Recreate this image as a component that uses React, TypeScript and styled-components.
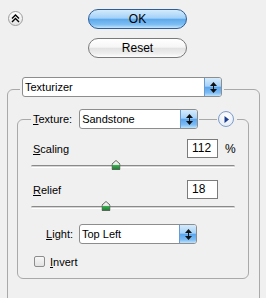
import React, { useId } from "react";
import styled, { createGlobalStyle } from "styled-components";

const Global = createGlobalStyle`
  html, body { margin: 0; padding: 0; background: #f0f0f0; overflow: hidden; }
  body {
    width: 266px; height: 298px;
    font-family: "Liberation Sans", Arial, sans-serif;
    font-size: 11px; color: #000;
  }
`;

const Page = styled.div`
  width: 266px;
  height: 298px;
  overflow: hidden;
  background: #f0f0f0;
`;

const TopBar = styled.div`
  display: flex;
  align-items: flex-start;
  padding: 9px 0 0 8px;
`;

const CollapseButton = styled.div`
  width: 15px;
  height: 15px;
  margin-top: 2px;
  margin-right: 65px;
  box-sizing: border-box;
  border: 1px solid #9c9c9c;
  border-radius: 50%;
  background: linear-gradient(#ffffff, #e4e4e4);
  display: flex;
  align-items: center;
  justify-content: center;
`;

const ButtonColumn = styled.div`
  display: flex;
  flex-direction: column;
  gap: 9px;
`;

const PillButton = styled.div<{ $primary?: boolean }>`
  width: 99px;
  height: 20px;
  box-sizing: border-box;
  border-radius: 10px;
  border: 1px solid ${(p) => (p.$primary ? "#2f5d98" : "#7a7a7a")};
  background: ${(p) =>
    p.$primary
      ? "linear-gradient(#d3ebfc 0%, #a3d1f7 45%, #5ea9ec 52%, #7fbff3 82%, #c4e6fc 100%)"
      : "linear-gradient(#ffffff 0%, #f6f6f6 45%, #e2e2e2 52%, #efefef 82%, #fdfdfd 100%)"};
  display: flex;
  align-items: center;
  justify-content: center;
  font-size: 12px;
  line-height: 18px;
`;

const OuterGroup = styled.fieldset`
  margin: 19px 6px 0 7px;
  padding: 8px 10px 40px 9px;
  border: 1px solid #a9a9a9;
  border-radius: 6px;
  min-width: 0;
`;

const OuterLegend = styled.legend`
  padding: 0 2px 4px 2px;
  margin-left: 3px;
  display: flex;
`;

const SelectBox = styled.div<{ $w: number }>`
  width: ${(p) => p.$w}px;
  height: 20px;
  box-sizing: border-box;
  display: flex;
  background: #fff;
  border: 1px solid #8d8d8d;
  border-radius: 3px;
  overflow: hidden;
`;

const SelectText = styled.span`
  flex: 1;
  padding-left: 2px;
  line-height: 18px;
  white-space: nowrap;
`;

const SelectArrows = styled.span`
  width: 16px;
  border-left: 1px solid #6a9bd0;
  background: linear-gradient(#d5ebfd 0%, #a6d2f8 45%, #5aa6ee 52%, #7dbcf4 82%, #bfe3fb 100%);
  display: flex;
  align-items: center;
  justify-content: center;
`;

const InnerGroup = styled.fieldset`
  margin: 0;
  padding: 10px 13px 10px 13px;
  border: 1px solid #a9a9a9;
  border-radius: 6px;
  min-width: 0;
`;

const InnerLegend = styled.legend`
  padding: 0 3px 0 2px;
  display: flex;
  align-items: center;
`;

const LegendLabel = styled.span`
  margin-right: 7px;
  white-space: nowrap;
`;

const Connector = styled.span`
  width: 18px;
  height: 1px;
  margin: 0 1px;
  background: #a9a9a9;
`;

const RoundIcon = styled.div`
  width: 16px;
  height: 16px;
  box-sizing: border-box;
  border-radius: 50%;
  border: 1px solid #7d9ccb;
  background: radial-gradient(circle at 50% 35%, #ffffff, #dfe7f2);
  display: flex;
  align-items: center;
  justify-content: center;
`;

const Mn = styled.span`
  text-decoration: underline;
`;

const ValueRow = styled.div<{ $mt?: number }>`
  display: grid;
  grid-template-columns: 1fr 31px 10px;
  column-gap: 7px;
  align-items: center;
  height: 19px;
  padding-left: 2px;
  margin-top: ${(p) => p.$mt ?? 0}px;
`;

const NumberBox = styled.div`
  height: 19px;
  box-sizing: border-box;
  border: 1px solid #7b7b7b;
  background: #fff;
  padding-left: 4px;
  line-height: 17px;
  font-size: 12px;
`;

const Unit = styled.span`
  font-size: 12px;
`;

const Slider = styled.div`
  position: relative;
  height: 15px;
  margin-top: 1px;
`;

const Track = styled.div`
  position: absolute;
  left: 0;
  right: 0;
  top: 6px;
  height: 3px;
  box-sizing: border-box;
  border-top: 1px solid #8a8a8a;
  border-bottom: 1px solid #ffffff;
  background: #d6d6d6;
  border-radius: 2px;
`;

const Thumb = styled.div`
  position: absolute;
  top: 1px;
  width: 9px;
  height: 10px;
  transform: translateX(-50%);
  display: flex;
`;

const LightRow = styled.div`
  display: flex;
  align-items: center;
  margin-top: 9px;
  gap: 6px;
`;

const SideLabel = styled.span`
  width: 42px;
  text-align: right;
  white-space: nowrap;
`;

const CheckRow = styled.div`
  display: flex;
  align-items: center;
  height: 13px;
  margin-top: 11px;
  padding-left: 3px;
  gap: 5px;
`;

const CheckBox = styled.div`
  width: 11px;
  height: 11px;
  box-sizing: border-box;
  border: 1px solid #8c8c8c;
  border-radius: 2px;
  background: linear-gradient(#f7f7f7, #e2e2e2);
`;

const Arrows = () => (
  <svg width="7" height="11" viewBox="0 0 7 11">
    <path d="M3.5 0 L7 4 H0 Z" fill="#111" />
    <rect x="3" y="4" width="1" height="3" fill="#111" />
    <path d="M0 7 H7 L3.5 11 Z" fill="#111" />
  </svg>
);

const Select = ({ w, value }: { w: number; value: string }) => (
  <SelectBox $w={w}>
    <SelectText>{value}</SelectText>
    <SelectArrows>
      <Arrows />
    </SelectArrows>
  </SelectBox>
);

const ThumbIcon = () => {
  const id = useId().replace(/:/g, "");
  return (
    <svg width="9" height="10" viewBox="0 0 9 10">
      <defs>
        <linearGradient id={id} x1="0" y1="0" x2="0" y2="1">
          <stop offset="0" stopColor="#ffffff" />
          <stop offset="0.45" stopColor="#e6e6e6" />
          <stop offset="0.5" stopColor="#3bb552" />
          <stop offset="1" stopColor="#1d7a33" />
        </linearGradient>
      </defs>
      <path d="M4.5 0.5 L8.5 4 L8.5 9.5 L0.5 9.5 L0.5 4 Z" fill={`url(#${id})`} stroke="#5c665c" />
    </svg>
  );
};

const SliderBar = ({ pct }: { pct: number }) => (
  <Slider>
    <Track />
    <Thumb style={{ left: `calc(4px + ${pct} * (100% - 8px))` }}>
      <ThumbIcon />
    </Thumb>
  </Slider>
);

export default function App() {
  return (
    <Page>
      <Global />
      <TopBar>
        <CollapseButton>
          <svg width="9" height="9" viewBox="0 0 9 9">
            <path d="M1 4.5 L4.5 1 L8 4.5 M1 8 L4.5 4.5 L8 8" fill="none" stroke="#000" strokeWidth="1.4" />
          </svg>
        </CollapseButton>
        <ButtonColumn>
          <PillButton $primary>OK</PillButton>
          <PillButton>Reset</PillButton>
        </ButtonColumn>
      </TopBar>
      <OuterGroup>
        <OuterLegend>
          <Select w={200} value="Texturizer" />
        </OuterLegend>
        <InnerGroup>
          <InnerLegend>
            <LegendLabel>
              <Mn>T</Mn>exture:
            </LegendLabel>
            <Select w={119} value="Sandstone" />
            <Connector />
            <RoundIcon>
              <svg width="5" height="7" viewBox="0 0 5 7">
                <path d="M0.5 0 L5 3.5 L0.5 7 Z" fill="#1a3c93" />
              </svg>
            </RoundIcon>
          </InnerLegend>
          <ValueRow>
            <span>
              <Mn>S</Mn>caling
            </span>
            <NumberBox>112</NumberBox>
            <Unit>%</Unit>
          </ValueRow>
          <SliderBar pct={(112 - 50) / 150} />
          <ValueRow $mt={6}>
            <span>
              <Mn>R</Mn>elief
            </span>
            <NumberBox>18</NumberBox>
            <span />
          </ValueRow>
          <SliderBar pct={18 / 50} />
          <LightRow>
            <SideLabel>
              <Mn>L</Mn>ight:
            </SideLabel>
            <Select w={118} value="Top Left" />
          </LightRow>
          <CheckRow>
            <CheckBox />
            <span>
              <Mn>I</Mn>nvert
            </span>
          </CheckRow>
        </InnerGroup>
      </OuterGroup>
    </Page>
  );
}
